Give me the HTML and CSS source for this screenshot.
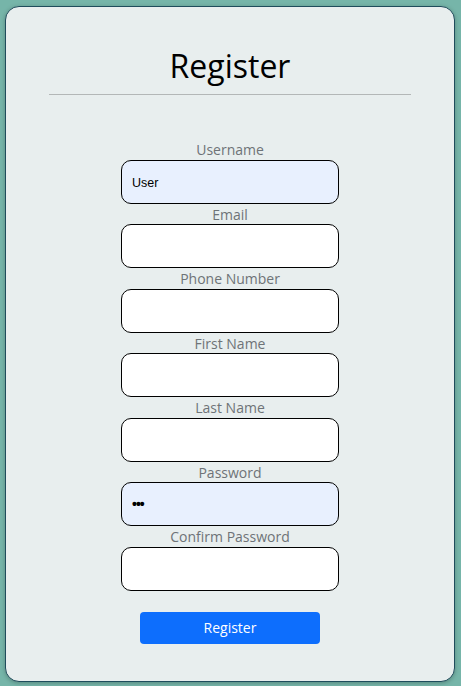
FILE: index.html
```html
<!DOCTYPE html>
<html lang="en">
<head>
<meta charset="utf-8">
<title>Register</title>
<link rel="stylesheet" href="styles.css">
</head>
<body>
<div class="card">
  <h1 class="title">Register</h1>
  <hr class="rule">
  <form class="form">
    <label class="label">Username</label>
    <div class="input filled"><span class="value">User</span></div>
    <label class="label">Email</label>
    <div class="input"></div>
    <label class="label">Phone Number</label>
    <div class="input"></div>
    <label class="label">First Name</label>
    <div class="input"></div>
    <label class="label">Last Name</label>
    <div class="input"></div>
    <label class="label">Password</label>
    <div class="input filled"><span class="dots">•••</span></div>
    <label class="label">Confirm Password</label>
    <div class="input"></div>
    <button type="button" class="btn">Register</button>
  </form>
</div>
</body>
</html>
```
FILE: styles.css
```css
html, body {
  margin: 0;
  padding: 0;
}
body {
  background: #76b5a9;
  width: 461px;
  height: 686px;
  overflow: hidden;
  font-family: "Open Sans", "Noto Sans", sans-serif;
}
.card {
  box-sizing: border-box;
  margin: 6px 6px 0 5px;
  width: 450px;
  height: 676px;
  background: #e8eeee;
  border: 1px solid #1f4c5c;
  border-radius: 14px;
  box-shadow: 0 1px 4px rgba(0,0,0,0.25);
  padding-top: 37px;
  display: flex;
  flex-direction: column;
  align-items: center;
}
.title {
  margin: 0;
  font-weight: 400;
  font-size: 32px;
  line-height: 44px;
  color: #000;
}
.rule {
  margin: 6px 0 0 0;
  width: 362px;
  border: 0;
  border-top: 1px solid #b3b7b7;
  height: 0;
}
.form {
  margin-top: 44px;
  display: flex;
  flex-direction: column;
  align-items: center;
}
.label {
  height: 20.5px;
  line-height: 22px;
  font-size: 14px;
  color: #6e7377;
}
.input {
  box-sizing: border-box;
  width: 218px;
  height: 44px;
  border: 1px solid #000;
  border-radius: 10px;
  background: #fff;
  display: flex;
  align-items: center;
  padding-left: 10px;
}
.input.filled {
  background: #e8f0fe;
}
.value {
  font-family: "Liberation Sans", Arial, sans-serif;
  font-size: 12.5px;
  color: #000;
  margin-top: 2px;
}
.dots {
  font-family: "Liberation Sans", Arial, sans-serif;
  font-size: 14px;
  font-weight: 700;
  letter-spacing: -1px;
  color: #000;
}
.btn {
  margin-top: 21px;
  width: 180px;
  height: 32px;
  border: 0;
  border-radius: 4px;
  background: #0d6efd;
  color: #fff;
  font-family: "Open Sans", "Noto Sans", sans-serif;
  font-size: 14px;
  padding: 0;
}
```
